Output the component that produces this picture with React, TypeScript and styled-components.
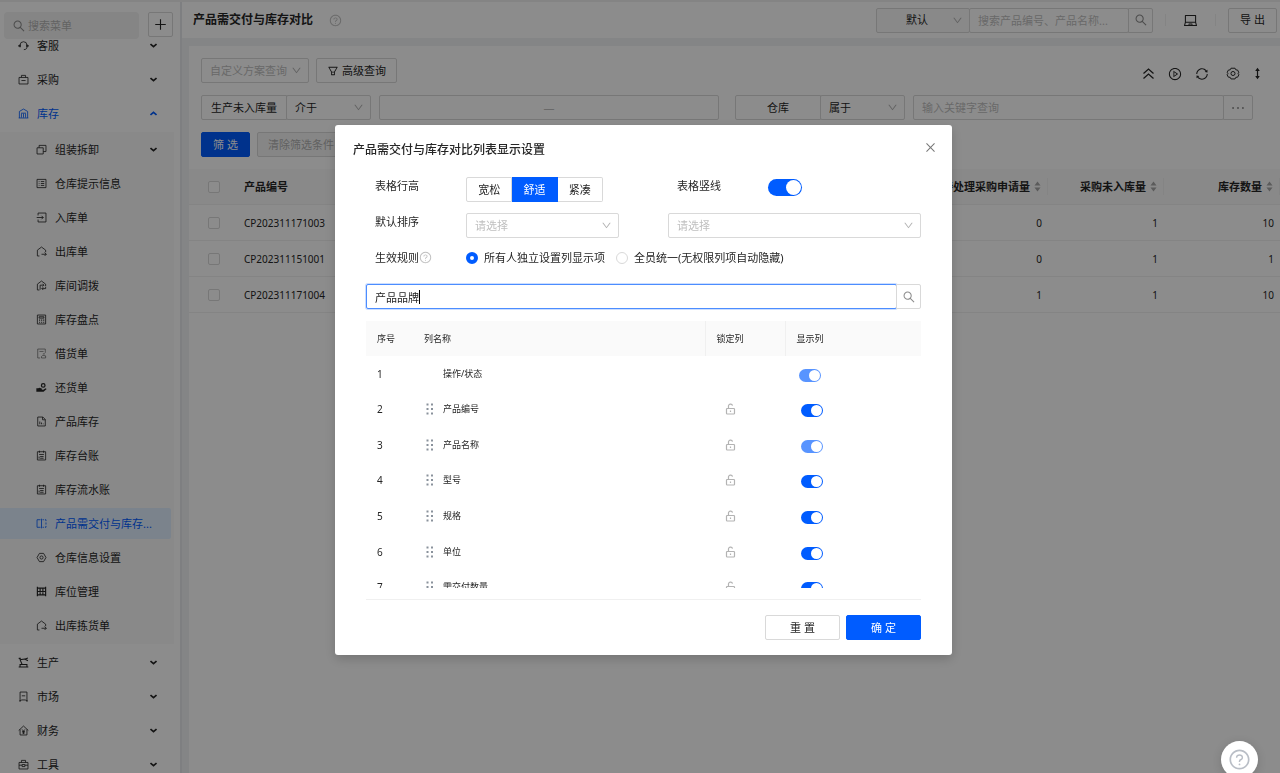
import React, { useState } from "react";
import styled, { createGlobalStyle, css } from "styled-components";
import {
  AiOutlineClose,
  AiOutlineDown,
  AiOutlineEllipsis,
  AiOutlineFilter,
  AiOutlineLaptop,
  AiOutlinePlayCircle,
  AiOutlinePlus,
  AiOutlineQuestionCircle,
  AiOutlineSearch,
  AiOutlineSync,
} from "react-icons/ai";

const color = {
  primary: "#005cff",
  text: "#262626",
  muted: "#8c8c8c",
  hint: "#bfbfbf",
  line: "#d9d9d9",
  softLine: "#f0f0f0",
  head: "#fafafa",
};

const GlobalStyle = createGlobalStyle`
  *, *::before, *::after { box-sizing: border-box; }
  html, body, #root { height: 100%; }
  body {
    margin: 0;
    overflow: hidden;
    color: ${color.text};
    font-family: "Noto Sans", "Noto Sans CJK SC", sans-serif;
    font-size: 11px;
    line-height: 16px;
  }
  button, input, select { font: inherit; color: inherit; margin: 0; }
  button { cursor: pointer; }
  a { color: inherit; text-decoration: none; }
  ul { margin: 0; padding: 0; list-style: none; }
  svg { display: block; flex: none; }
`;

/* ---------- icons of the side menu ---------- */

const paths: Record<string, React.ReactNode> = {
  service: (
    <>
      <path d="M3 9.5V7.5a5 5 0 0 1 10 0v2M13 10.5c0 2-1.5 3.5-4.5 3.5" />
      <path d="M3 6.5v4M1.2 7.5v2M13 6.5v4M14.8 7.5v2" strokeWidth="1.8" />
    </>
  ),
  bag: <path d="M1.5 5h13v9.500h-13zM5 5V2h6v3M5 9.500h6" />,
  warehouse: <path d="M2 14.500V5l6-3.500L14 5v9.500M1 14.500h14M5 14V8M8 14V8M11 14V8M4.500 7.500h7" />,
  stack: <path d="M1.500 5.500h9v9h-9zM4.500 5.500v-3.500h10v9h-4" />,
  notice: <path d="M1.500 2h13v12h-13zM4 5.200h1M7 5.200h5M4 8h1M7 8h5M4 10.800h1M7 10.800h5" />,
  enter: <path d="M3 5V1.500h11.500v13H3V11M1 8h9.500M8 5.500 10.500 8 8 10.500" />,
  leave: <path d="M5 14.500H2V6l6-4.500L14 6v3M8 12h7M12.500 9.500 15 12l-2.500 2.500" />,
  transfer: <path d="M5 14.500H2V6l6-4.500L14 6v3M6 14V7.500h5M9.500 5.500l2 2-2 2M8.500 12.500H14V10M10.500 10.500l-2 2 2 2" />,
  calculator: (
    <>
      <path d="M2 1.500h12v13H2zM4.500 4h7v2h-7z" />
      <path d="M4.500 9h1.500M7.500 9H9M10.500 9H12M4.500 12h1.500M7.500 12H9M10.500 12H12" strokeWidth="1.800" />
    </>
  ),
  lend: <path opacity=".6" d="M13.500 7V1.500h-11v13H6M5 5h6M8 12.500l2-2 4 1v3H8zM10 8.500h3" />,
  giveBack: (
    <g fill="currentColor" stroke="none">
      <path d="M10.500 1.500a3.500 3.500 0 1 1 0 7 3.500 3.500 0 0 1 0-7zm0 1.800a1.700 1.700 0 1 0 0 3.400 1.700 1.700 0 0 0 0-3.400z" />
      <path d="M.5 9H3l2.500-.8 4 1.800-.5 1.200H6.500l3.500.3 4-2.500 1.500 1-4.500 4H.5z" />
    </g>
  ),
  docChart: <path d="M2.500 1.500H10L13.500 5v9.500h-11zM9.500 1.500v4h4M5.500 12V8M8 12V9.500M10.500 12v-1" />,
  ledger: <path d="M2 2.500h12v12H2zM5 1v3M11 1v3M4.500 6.500h7M6 9.500h5M6 12h5M4.500 9.500v3" />,
  compare: <path d="M6.500 2.500h-5v11h5M8 1v14M9.500 2.500h2M13 2.500h1.500v2M14.500 6.500v3M14.500 11.500v2H13M11.500 13.500h-2" />,
  gear: (
    <>
      <path d="M5 2h6l3.500 6L11 14H5L1.500 8z" />
      <circle cx="8" cy="8" r="2.300" />
    </>
  ),
  shelf: <path strokeWidth="1.700" d="M2 1v14M14 1v14M2 3h12M2 8h12M2 13h12M6 4v4M10 4v4M6 9v4M10 9v4" />,
  robot: <path strokeWidth="1.500" d="M1 14.500h14M3 14v-3h10v3M6 11 3 4l7-1M1 2h3M14.500 1.500 10 3l4.500 2.500" />,
  market: <path d="M3 14.500v-13h10v13l-2.500-1.500h-5zM5.500 7h5M1.500 14.500H4M12 14.500h2.500" />,
  finance: <path d="M1 8l7-6.500L15 8M3 6.500v8h10v-8M6 6.500l2 2.500 2-2.500M8 9v4M6 9.500h4M6 11.500h4" />,
  toolbox: <path d="M1.500 5h13v9.500h-13zM5 5V2h6v3M1.500 9H6M10 9h4.500M6 8h4v3H6z" />,
};

const MenuIcon = ({ name }: { name: string }) => (
  <svg width="11" height="11" viewBox="0 0 16 16" fill="none" stroke="currentColor" strokeWidth="1.200" aria-hidden="true">
    {paths[name]}
  </svg>
);

/* ---------- shared controls ---------- */

const Button = styled.button<{ $primary?: boolean; $wide?: boolean; $off?: boolean }>`
  display: inline-flex;
  align-items: center;
  justify-content: center;
  gap: 3px;
  height: 25px;
  min-width: ${(p) => (p.$wide ? 75 : 49)}px;
  padding: 0 10px;
  white-space: nowrap;
  border: 1px solid ${(p) => (p.$primary ? color.primary : color.line)};
  border-radius: 2px;
  background: ${(p) => (p.$primary ? color.primary : p.$off ? "#f5f5f5" : "#fff")};
  color: ${(p) => (p.$primary ? "#fff" : p.$off ? "#b0b0b0" : color.text)};
`;

const SelectBox = styled.span<{ $width?: number; $joined?: boolean }>`
  position: relative;
  display: flex;
  flex: ${(p) => (p.$width ? `0 0 ${p.$width}px` : "1")};
  margin-left: ${(p) => (p.$joined ? "-1px" : "0")};
  & > svg {
    position: absolute;
    right: 7px;
    top: 7px;
    color: #b3b3b3;
    pointer-events: none;
  }
`;

const NativeSelect = styled.select<{ $hint?: boolean; $center?: boolean }>`
  appearance: none;
  width: 100%;
  height: 25px;
  padding: 0 20px 0 8px;
  border: 1px solid ${color.line};
  border-radius: 2px;
  outline: 0;
  background: ${(p) => (p.$center ? "#f9f9f9" : "#fff")};
  color: ${(p) => (p.$hint ? color.hint : color.text)};
  text-align-last: ${(p) => (p.$center ? "center" : "left")};
`;

interface SelectProps {
  label: string;
  value: string;
  width?: number;
  hint?: boolean;
  center?: boolean;
  joined?: boolean;
}

const Select = ({ label, value, width, hint, center, joined }: SelectProps) => (
  <SelectBox $width={width} $joined={joined}>
    <NativeSelect aria-label={label} $hint={hint} $center={center}>
      <option>{value}</option>
    </NativeSelect>
    <AiOutlineDown size={11} />
  </SelectBox>
);

const TextInput = styled.input<{ $active?: boolean; $joined?: boolean }>`
  flex: 1;
  min-width: 0;
  height: 25px;
  padding: 0 8px;
  border: 1px solid ${(p) => (p.$active ? "#4c8dff" : color.line)};
  border-radius: 2px;
  margin-left: ${(p) => (p.$joined ? "-1px" : "0")};
  outline: 0;
  background: #fff;
  box-shadow: ${(p) => (p.$active ? "0 0 0 1px rgba(0, 92, 255, 0.2)" : "none")};
  caret-color: ${(p) => (p.$active ? "transparent" : "auto")};
  text-overflow: ellipsis;
  &::placeholder {
    color: ${color.hint};
  }
`;

const EndButton = styled.button<{ $width?: number }>`
  display: flex;
  flex: 0 0 ${(p) => p.$width ?? 25}px;
  align-items: center;
  justify-content: center;
  height: 25px;
  margin-left: -1px;
  padding: 0;
  border: 1px solid ${color.line};
  border-radius: 0 2px 2px 0;
  background: #fff;
  color: ${color.muted};
`;

const IconButton = styled.button<{ $apart?: boolean }>`
  display: flex;
  padding: 0;
  margin-left: ${(p) => (p.$apart ? 3 : 0)}px;
  border: 0;
  background: none;
  color: inherit;
`;

const Switch = styled.input<{ $small?: boolean }>`
  appearance: none;
  display: block;
  flex: none;
  width: ${(p) => (p.$small ? 22 : 34)}px;
  height: ${(p) => (p.$small ? 13 : 17)}px;
  padding: 1px;
  border-radius: 9px;
  background: ${color.hint};
  &::before {
    content: "";
    display: block;
    height: 100%;
    aspect-ratio: 1;
    border-radius: 50%;
    background: #fff;
  }
  &:checked {
    background: ${color.primary};
  }
  &:checked::before {
    margin-left: auto;
  }
  &:disabled {
    opacity: 0.65;
  }
`;

/* ---------- page frame ---------- */

const Layout = styled.div`
  display: flex;
  height: 100vh;
  overflow: hidden;
  border-top: 2px solid #f0f0f0;
  background: #fff;
`;

const Sidebar = styled.aside`
  display: flex;
  flex: 0 0 180px;
  flex-direction: column;
  overflow: hidden;
`;

const SidebarTop = styled.div`
  display: flex;
  gap: 9px;
  padding: 10px 7px 0 4px;
`;

const MenuSearch = styled.label`
  display: flex;
  flex: 1;
  align-items: center;
  gap: 2px;
  height: 27px;
  padding: 0 8px;
  border-radius: 4px;
  background: #f3f3f3;
  color: ${color.muted};
  input {
    width: 100%;
    min-width: 0;
    padding: 0;
    border: 0;
    outline: 0;
    background: none;
  }
  input::placeholder {
    color: #b4b4b4;
  }
`;

const AddButton = styled.button`
  display: grid;
  place-items: center;
  width: 25px;
  height: 25px;
  padding: 0;
  border: 1px solid ${color.line};
  border-radius: 2px;
  background: #fff;
`;

const MenuScroll = styled.nav`
  flex: 1;
  min-height: 0;
  overflow: hidden;
  & > ul {
    margin-top: -9px;
  }
`;

const MenuLink = styled.a<{ $sub?: boolean; $tone?: "open" | "current" }>`
  display: flex;
  align-items: center;
  gap: 8px;
  height: 31px;
  margin: 0 ${(p) => (p.$sub ? 3 : 9)}px 3px 0;
  padding: 0 14px 0 ${(p) => (p.$sub ? 36 : 18)}px;
  border-radius: 0 2px 2px 0;
  white-space: nowrap;
  ${(p) =>
    p.$tone &&
    css`
      color: ${color.primary};
    `}
  ${(p) =>
    p.$tone === "current" &&
    css`
      background: #e0efff;
    `}
  & > span {
    flex: 1;
    overflow: hidden;
    text-overflow: ellipsis;
  }
`;

const SubMenu = styled.ul`
  display: flow-root;
  margin: 0 6px 3px 0;
  padding-top: 2px;
  background: #fafafa;
`;

const Chevron = ({ up }: { up?: boolean }) => (
  <svg width="7" height="5" viewBox="0 0 7 5" fill="none" stroke="currentColor" strokeWidth="1.600" aria-hidden="true">
    <path d={up ? "M.5 4 3.500 1.300 6.500 4" : "M.5 1 3.500 3.700 6.500 1"} />
  </svg>
);

const Main = styled.main`
  display: flex;
  flex: 1;
  flex-direction: column;
  min-width: 0;
  border-left: 2px solid #e6e8ec;
  background: #f0f2f5;
`;

const Header = styled.header`
  display: flex;
  align-items: center;
  height: 36px;
  margin-bottom: 8px;
  padding: 0 3px 0 11px;
  background: #fff;
`;

const PageTitle = styled.h1`
  margin: 0 16px 0 0;
  font-size: 12px;
  font-weight: 600;
  line-height: 18px;
`;

const HelpMark = styled.span`
  display: flex;
  color: ${color.hint};
`;

const HeaderTools = styled.div`
  display: flex;
  align-items: center;
  gap: 12px;
  margin-left: auto;
`;

const SearchGroup = styled.div`
  display: flex;
  width: 277px;
`;

const Divider = styled.span`
  width: 1px;
  height: 12px;
  background: ${color.softLine};
`;

const DeviceButton = styled(IconButton)`
  margin: 0 5px;
`;

const Content = styled.section`
  display: flex;
  flex: 1;
  flex-direction: column;
  min-height: 0;
  margin-left: 7px;
  background: #fff;
`;

const Filters = styled.form`
  display: grid;
  gap: 12px;
  padding: 12px 27px 12px 12px;
`;

const FilterLine = styled.div`
  display: flex;
  align-items: center;
  gap: 7px;
`;

const FilterPair = styled.div`
  display: grid;
  grid-template-columns: repeat(2, minmax(0, 1fr));
  gap: 16px;
`;

const Field = styled.div`
  display: flex;
`;

const FieldName = styled.span`
  display: grid;
  flex: 0 0 86px;
  place-items: center;
  height: 25px;
  border: 1px solid ${color.line};
  border-radius: 2px 0 0 2px;
`;

const FieldValue = styled.div`
  display: flex;
  flex: 1;
  min-width: 0;
  margin-left: 8px;
`;

const Range = styled.div`
  display: flex;
  flex: 1;
  align-items: center;
  min-width: 0;
  height: 25px;
  margin-left: 8px;
  border: 1px solid ${color.line};
  border-radius: 2px;
  color: ${color.hint};
  input {
    flex: 1;
    min-width: 0;
    padding: 0 8px;
    border: 0;
    outline: 0;
    background: none;
  }
`;

const TableTools = styled.div`
  display: flex;
  align-items: center;
  gap: 13px;
  margin: 6px -8px 0 auto;
`;

const DataTable = styled.table`
  width: 100%;
  table-layout: fixed;
  border-collapse: separate;
  border-spacing: 0;
  th,
  td {
    height: 36px;
    padding: 0 6px;
    border-bottom: 1px solid ${color.softLine};
    text-align: left;
    font-weight: 400;
    white-space: nowrap;
  }
  td {
    font-size: 10px;
  }
  th {
    background: ${color.head};
    font-weight: 600;
  }
  th:first-child,
  td:first-child {
    width: 49px;
    text-align: center;
  }
`;

const NumberHead = styled.th`
  width: 116px;
  & > span {
    display: flex;
    align-items: center;
    justify-content: flex-end;
    gap: 4px;
    height: 17px;
    margin-right: -6px;
    padding-right: 6px;
    border-right: 1px solid ${color.softLine};
  }
`;

const NumberCell = styled.td`
  && {
    text-align: right;
  }
`;

const Tick = styled.input`
  appearance: none;
  display: block;
  width: 12px;
  height: 12px;
  margin: 0 auto;
  border: 1px solid ${color.line};
  border-radius: 2px;
  background: #fff;
`;

const Sorter = () => (
  <svg width="7" height="11" viewBox="0 0 7 11" fill="#a6a6a6" aria-hidden="true">
    <path d="M3.500 0.500 6.500 4.500h-6zM3.500 10.500 6.500 6.500h-6z" />
  </svg>
);

/* ---------- dialog ---------- */

const Mask = styled.div`
  position: fixed;
  inset: 0;
  display: flex;
  align-items: flex-start;
  justify-content: center;
  padding: 125px 0 0 7px;
  background: rgba(0, 0, 0, 0.45);
`;

const Dialog = styled.div`
  position: relative;
  width: 617px;
  max-width: 100%;
  padding: 16px 31px 15px;
  border-radius: 3px;
  background: #fff;
  box-shadow: 0 4px 12px rgba(0, 0, 0, 0.18);
`;

const DialogHead = styled.div`
  display: flex;
  align-items: flex-start;
  justify-content: space-between;
  height: 18px;
  margin: 0 -16px 18px -13px;
  h2 {
    margin: 0;
    font-size: 12px;
    font-weight: 500;
    line-height: 18px;
  }
  button {
    color: #777;
  }
`;

const Options = styled.div`
  display: grid;
  grid-template-columns: 91px 153px 1fr 253px;
  grid-auto-rows: 25px;
  row-gap: 11px;
  padding-left: 9px;
  margin-bottom: 10px;
`;

const OptionName = styled.span`
  display: flex;
  align-items: center;
  height: 17px;
`;

const Segmented = styled.div`
  display: flex;
  width: 137px;
  button {
    flex: 1;
    height: 25px;
    padding: 0;
    border: 1px solid ${color.line};
    background: #fff;
  }
  button + button {
    border-left: 0;
  }
  button:first-child {
    border-radius: 2px 0 0 2px;
  }
  button:last-child {
    border-radius: 0 2px 2px 0;
  }
  button[aria-pressed="true"] {
    border-color: ${color.primary};
    background: ${color.primary};
    color: #fff;
  }
`;

const LineSwitch = styled.label`
  display: flex;
  grid-column: 4;
  align-items: flex-start;
  gap: 47px;
  padding-left: 9px;
  input {
    margin-top: 2px;
  }
`;

const RuleChoices = styled.div`
  display: flex;
  grid-column: 2 / -1;
  align-items: center;
  gap: 11px;
  height: 17px;
  label {
    display: flex;
    align-items: center;
    gap: 6px;
  }
  input {
    appearance: none;
    width: 12px;
    height: 12px;
    border: 1px solid ${color.line};
    border-radius: 50%;
  }
  input:checked {
    border: 4px solid ${color.primary};
  }
`;

const ColumnSearch = styled.div`
  position: relative;
  display: flex;
  margin-bottom: 12px;
`;

const Caret = styled.span`
  position: absolute;
  top: 6px;
  left: 9px;
  width: 1px;
  height: 14px;
  background: #000;
`;

const ColumnScroll = styled.div`
  height: 267px;
  overflow: hidden;
  margin-bottom: 11px;
`;

const ColumnTable = styled.table`
  width: 100%;
  height: 284px;
  table-layout: fixed;
  border-collapse: collapse;
  font-size: 9px;
  line-height: 14px;
  th {
    height: 35px;
    padding: 0 11px;
    background: ${color.head};
    text-align: left;
    font-weight: 400;
  }
  th:nth-child(n + 3) {
    border-left: 1px solid ${color.softLine};
  }
  td {
    padding: 0 11px;
  }
  td:first-child {
    font-size: 10px;
  }
`;

const NameCell = styled.div`
  display: flex;
  align-items: center;
  gap: 9px;
  padding-left: 2px;
`;

const GripSlot = styled.span`
  width: 8px;
`;

const LockButton = styled(IconButton)`
  margin-left: 9px;
  color: #b3b3b3;
`;

const Unlocked = () => (
  <svg width="11" height="12" viewBox="0 0 11 12" fill="none" stroke="currentColor" strokeWidth="1.200" aria-hidden="true">
    <rect x="1.500" y="5.500" width="8" height="5.500" rx="0.800" />
    <path d="M3.500 5.500v-2a2 2 0 0 1 4-.8M5.500 7.600v1.400" />
  </svg>
);

const SwitchSlot = styled.div<{ $fixed?: boolean }>`
  padding: 3px 0 0 ${(p) => (p.$fixed ? 3 : 5)}px;
`;

const DialogFoot = styled.div`
  display: flex;
  justify-content: flex-end;
  gap: 6px;
  padding-top: 15px;
  border-top: 1px solid ${color.softLine};
`;

const Grip = () => (
  <svg width="8" height="12" viewBox="0 0 8 12" fill="#8a929c" aria-hidden="true">
    <path d="M.5 0.500h2v2h-2zM5 0.500h2v2H5zM.5 5h2v2h-2zM5 5h2v2H5zM.5 9.500h2v2h-2zM5 9.500h2v2H5z" />
  </svg>
);

const HelpBubble = styled.button`
  position: fixed;
  right: 22px;
  bottom: -5px;
  display: grid;
  place-items: center;
  width: 37px;
  height: 37px;
  padding: 0;
  border: 0;
  border-radius: 50%;
  background: #fff;
  color: #b9bec6;
  box-shadow: 0 2px 10px rgba(0, 0, 0, 0.15);
`;

/* ---------- data ---------- */

type Entry = { label: string; icon: string; more?: boolean; current?: boolean };

const topBefore: Entry[] = [
  { label: "客服", icon: "service", more: true },
  { label: "采购", icon: "bag", more: true },
];

const stock: Entry[] = [
  { label: "组装拆卸", icon: "stack", more: true },
  { label: "仓库提示信息", icon: "notice" },
  { label: "入库单", icon: "enter" },
  { label: "出库单", icon: "leave" },
  { label: "库间调拨", icon: "transfer" },
  { label: "库存盘点", icon: "calculator" },
  { label: "借货单", icon: "lend" },
  { label: "还货单", icon: "giveBack" },
  { label: "产品库存", icon: "docChart" },
  { label: "库存台账", icon: "ledger" },
  { label: "库存流水账", icon: "ledger" },
  { label: "产品需交付与库存...", icon: "compare", current: true },
  { label: "仓库信息设置", icon: "gear" },
  { label: "库位管理", icon: "shelf" },
  { label: "出库拣货单", icon: "leave" },
];

const topAfter: Entry[] = [
  { label: "生产", icon: "robot", more: true },
  { label: "市场", icon: "market", more: true },
  { label: "财务", icon: "finance", more: true },
  { label: "工具", icon: "toolbox", more: true },
];

const products = [
  { code: "CP202311171003", pending: 0, inbound: 1, quantity: 10 },
  { code: "CP202311151001", pending: 0, inbound: 1, quantity: 1 },
  { code: "CP202311171004", pending: 1, inbound: 1, quantity: 10 },
];

const columns = [
  { name: "操作/状态", fixed: true, locked: true },
  { name: "产品编号" },
  { name: "产品名称", locked: true },
  { name: "型号" },
  { name: "规格" },
  { name: "单位" },
  { name: "需交付数量" },
];

const Item = ({ entry, sub }: { entry: Entry; sub?: boolean }) => (
  <li>
    <MenuLink href="#" $sub={sub} $tone={entry.current ? "current" : undefined}>
      <MenuIcon name={entry.icon} />
      <span>{entry.label}</span>
      {entry.more && <Chevron />}
    </MenuLink>
  </li>
);

const SettingsDialog = () => {
  const [density, setDensity] = useState("舒适");
  const [keyword, setKeyword] = useState("产品品牌");
  return (
    <Mask>
      <Dialog role="dialog" aria-labelledby="dialog-title">
        <DialogHead>
          <h2 id="dialog-title">产品需交付与库存对比列表显示设置</h2>
          <IconButton aria-label="关闭">
            <AiOutlineClose size={13} />
          </IconButton>
        </DialogHead>
        <Options>
          <OptionName>表格行高</OptionName>
          <Segmented role="group" aria-label="表格行高">
            {["宽松", "舒适", "紧凑"].map((name) => (
              <button key={name} type="button" aria-pressed={density === name} onClick={() => setDensity(name)}>
                {name}
              </button>
            ))}
          </Segmented>
          <LineSwitch>
            <OptionName>表格竖线</OptionName>
            <Switch type="checkbox" defaultChecked />
          </LineSwitch>
          <OptionName>默认排序</OptionName>
          <Select label="默认排序" value="请选择" hint />
          <span />
          <Select label="排序方式" value="请选择" hint />
          <OptionName>
            生效规则
            <HelpMark>
              <AiOutlineQuestionCircle size={13} />
            </HelpMark>
          </OptionName>
          <RuleChoices>
            <label>
              <input type="radio" name="rule" defaultChecked />
              所有人独立设置列显示项
            </label>
            <label>
              <input type="radio" name="rule" />
              全员统一(无权限列项自动隐藏)
            </label>
          </RuleChoices>
        </Options>
        <ColumnSearch>
          <TextInput $active autoFocus aria-label="搜索列" value={keyword} onChange={(e) => setKeyword(e.target.value)} />
          <Caret style={{ marginLeft: `${keyword.length}em` }} />
          <EndButton aria-label="搜索">
            <AiOutlineSearch size={14} />
          </EndButton>
        </ColumnSearch>
        <ColumnScroll>
          <ColumnTable>
            <colgroup>
              <col width="47" />
              <col />
              <col width="80" />
              <col width="136" />
            </colgroup>
            <thead>
              <tr>
                <th>序号</th>
                <th>列名称</th>
                <th>锁定列</th>
                <th>显示列</th>
              </tr>
            </thead>
            <tbody>
              {columns.map((column, index) => (
                <tr key={column.name}>
                  <td>{index + 1}</td>
                  <td>
                    <NameCell>
                      <GripSlot>{!column.fixed && <Grip />}</GripSlot>
                      {column.name}
                    </NameCell>
                  </td>
                  <td>
                    {!column.fixed && (
                      <LockButton aria-label={`锁定${column.name}`}>
                        <Unlocked />
                      </LockButton>
                    )}
                  </td>
                  <td>
                    <SwitchSlot $fixed={column.fixed}>
                      <Switch $small type="checkbox" defaultChecked disabled={column.locked} aria-label={`显示${column.name}`} />
                    </SwitchSlot>
                  </td>
                </tr>
              ))}
            </tbody>
          </ColumnTable>
        </ColumnScroll>
        <DialogFoot>
          <Button $wide>重 置</Button>
          <Button $wide $primary>
            确 定
          </Button>
        </DialogFoot>
      </Dialog>
    </Mask>
  );
};

export default function App() {
  return (
    <>
      <GlobalStyle />
      <Layout>
        <Sidebar>
          <SidebarTop>
            <MenuSearch>
              <AiOutlineSearch size={14} />
              <input placeholder="搜索菜单" aria-label="搜索菜单" />
            </MenuSearch>
            <AddButton aria-label="新建">
              <AiOutlinePlus size={15} />
            </AddButton>
          </SidebarTop>
          <MenuScroll>
            <ul>
              {topBefore.map((entry) => (
                <Item key={entry.label} entry={entry} />
              ))}
              <li>
                <MenuLink href="#" $tone="open">
                  <MenuIcon name="warehouse" />
                  <span>库存</span>
                  <Chevron up />
                </MenuLink>
                <SubMenu>
                  {stock.map((entry) => (
                    <Item key={entry.label} entry={entry} sub />
                  ))}
                </SubMenu>
              </li>
              {topAfter.map((entry) => (
                <Item key={entry.label} entry={entry} />
              ))}
            </ul>
          </MenuScroll>
        </Sidebar>

        <Main>
          <Header>
            <PageTitle>产品需交付与库存对比</PageTitle>
            <HelpMark>
              <AiOutlineQuestionCircle size={13} />
            </HelpMark>
            <HeaderTools>
              <SearchGroup>
                <Select label="搜索范围" value="默认" width={94} center />
                <TextInput $joined placeholder="搜索产品编号、产品名称..." aria-label="搜索产品" />
                <EndButton aria-label="搜索">
                  <AiOutlineSearch size={14} />
                </EndButton>
              </SearchGroup>
              <Divider />
              <DeviceButton aria-label="设备">
                <AiOutlineLaptop size={15} />
              </DeviceButton>
              <Divider />
              <Button>导 出</Button>
            </HeaderTools>
          </Header>

          <Content>
            <Filters>
              <FilterLine>
                <Select label="自定义方案查询" value="自定义方案查询" width={108} hint />
                <Button type="button">
                  <AiOutlineFilter size={12} />
                  高级查询
                </Button>
                <TableTools>
                  <IconButton type="button" aria-label="收起">
                    <svg width="13" height="13" viewBox="0 0 13 13" fill="none" stroke="currentColor" strokeWidth="1.300">
                      <path d="M1.500 6.500l5-4.500 5 4.500M1.500 11.500l5-4.500 5 4.500" />
                    </svg>
                  </IconButton>
                  <IconButton type="button" aria-label="播放">
                    <AiOutlinePlayCircle size={14} />
                  </IconButton>
                  <IconButton type="button" aria-label="刷新">
                    <AiOutlineSync size={14} />
                  </IconButton>
                  <IconButton type="button" $apart aria-label="设置">
                    <svg width="16" height="13" viewBox="0 0 16 16" fill="none" stroke="currentColor" strokeWidth="1.200">
                      <path d="M5.500 1.500h5l1 2 2.200.3 1.600 3.200L14 8l1.300 1.500-1.600 3-2.200.2-1 2h-5l-1-2-2.200-.2-1.600-3L2 8 .7 6.800l1.600-3 2.200-.3z" />
                      <circle cx="8" cy="8" r="2.500" />
                    </svg>
                  </IconButton>
                  <IconButton type="button" aria-label="行高">
                    <svg width="7" height="13" viewBox="0 0 7 13" fill="currentColor">
                      <path d="M3.500 .8 5.800 4H4.100v5h1.700L3.500 12.200 1.200 9h1.700V4H1.200z" />
                    </svg>
                  </IconButton>
                </TableTools>
              </FilterLine>
              <FilterPair>
                <Field>
                  <FieldName>生产未入库量</FieldName>
                  <Select label="生产未入库量条件" value="介于" width={85} joined />
                  <Range>
                    <input aria-label="最小值" />
                    —
                    <input aria-label="最大值" />
                  </Range>
                </Field>
                <Field>
                  <FieldName>仓库</FieldName>
                  <Select label="仓库条件" value="属于" width={85} joined />
                  <FieldValue>
                    <TextInput placeholder="输入关键字查询" aria-label="仓库关键字" />
                    <EndButton type="button" $width={30} aria-label="更多">
                      <AiOutlineEllipsis size={18} />
                    </EndButton>
                  </FieldValue>
                </Field>
              </FilterPair>
              <FilterLine>
                <Button type="button" $primary>
                  筛 选
                </Button>
                <Button type="button" $off>
                  清除筛选条件
                </Button>
              </FilterLine>
            </Filters>

            <DataTable>
              <thead>
                <tr>
                  <th>
                    <Tick type="checkbox" aria-label="全选" />
                  </th>
                  <th>产品编号</th>
                  {["待处理采购申请量", "采购未入库量", "库存数量"].map((name) => (
                    <NumberHead key={name}>
                      <span>
                        {name}
                        <Sorter />
                      </span>
                    </NumberHead>
                  ))}
                </tr>
              </thead>
              <tbody>
                {products.map((product) => (
                  <tr key={product.code}>
                    <td>
                      <Tick type="checkbox" aria-label={product.code} />
                    </td>
                    <td>{product.code}</td>
                    <NumberCell>{product.pending}</NumberCell>
                    <NumberCell>{product.inbound}</NumberCell>
                    <NumberCell>{product.quantity}</NumberCell>
                  </tr>
                ))}
              </tbody>
            </DataTable>
          </Content>
        </Main>
      </Layout>
      <SettingsDialog />
      <HelpBubble aria-label="帮助">
        <AiOutlineQuestionCircle size={23} />
      </HelpBubble>
    </>
  );
}
